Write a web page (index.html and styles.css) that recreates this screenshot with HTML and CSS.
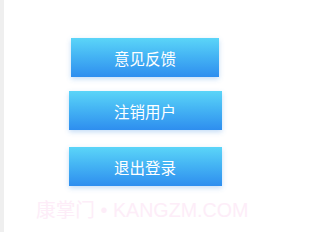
FILE: index.html
```html
<!DOCTYPE html>
<html lang="zh">
<head>
<meta charset="utf-8">
<link rel="stylesheet" href="styles.css">
</head>
<body>
<div class="page">
  <div class="strip"></div>
  <main class="main">
    <button class="btn btn-narrow">意见反馈</button>
    <button class="btn btn-second">注销用户</button>
    <button class="btn btn-third">退出登录</button>
  </main>
  <div class="watermark">康掌门 • KANGZM.COM</div>
</div>
</body>
</html>
```
FILE: styles.css
```css
html, body {
  margin: 0;
  padding: 0;
  background: #ffffff;
}
.page {
  position: relative;
  display: flex;
  width: 285px;
  height: 232px;
  overflow: hidden;
}
.strip {
  width: 4px;
  background: #efefef;
  flex: none;
}
.main {
  flex: 1;
  display: flex;
  flex-direction: column;
  align-items: center;
  padding-top: 38px;
  padding-left: 1px;
}
.btn {
  border: none;
  margin: 0;
  padding: 1px 0 0;
  height: 39px;
  color: #ffffff;
  font-family: "Noto Sans CJK SC", "Noto Sans", sans-serif;
  font-size: 15.5px;
  background: linear-gradient(180deg, #5bd5f8 0%, #45b5f4 45%, #2e8eef 100%);
  box-shadow: 0 2px 5px rgba(60, 140, 230, 0.3);
  display: flex;
  align-items: center;
  justify-content: center;
}
.btn-narrow {
  width: 148px;
}
.btn-second {
  width: 153px;
  margin-top: 14px;
}
.btn-third {
  width: 153px;
  margin-top: 17px;
}
.watermark {
  position: absolute;
  left: 36px;
  top: 198px;
  font-family: "Liberation Sans", "Noto Sans CJK SC", sans-serif;
  font-size: 19.7px;
  line-height: 24px;
  color: #fdedf8;
  white-space: nowrap;
}
```
